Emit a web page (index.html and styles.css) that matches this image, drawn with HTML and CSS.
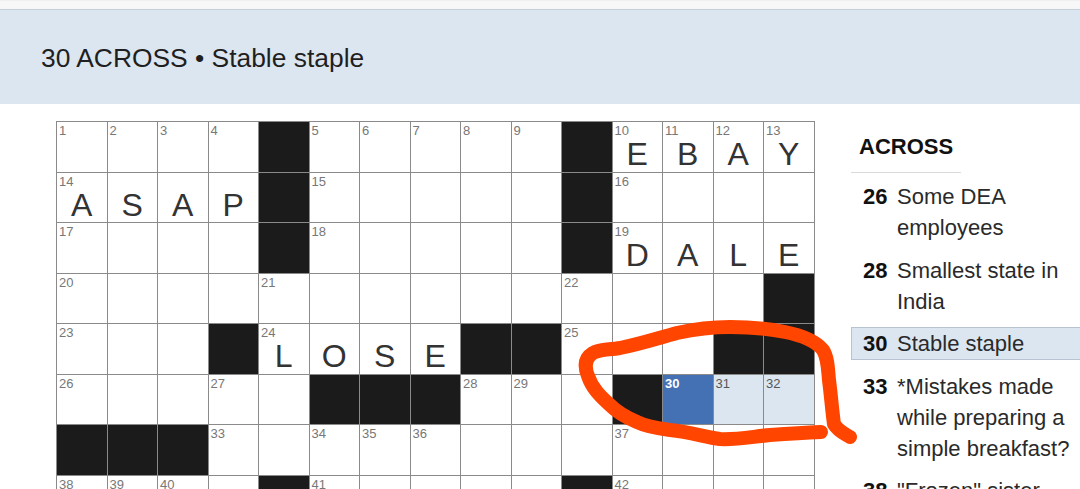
FILE: index.html
```html
<!DOCTYPE html>
<html lang="en">
<head>
<meta charset="utf-8">
<title>Crossword</title>
<link rel="stylesheet" href="styles.css">
</head>
<body>
<div class="topstrip"></div>
<header class="clue-bar">30 ACROSS • Stable staple</header>
<main class="main">
  <div class="grid">
    <!-- row 1 -->
    <div class="c"><i>1</i></div><div class="c"><i>2</i></div><div class="c"><i>3</i></div><div class="c"><i>4</i></div><div class="c b"></div>
    <div class="c"><i>5</i></div><div class="c"><i>6</i></div><div class="c"><i>7</i></div><div class="c"><i>8</i></div><div class="c"><i>9</i></div>
    <div class="c b"></div><div class="c"><i>10</i><span>E</span></div><div class="c"><i>11</i><span>B</span></div><div class="c"><i>12</i><span>A</span></div><div class="c"><i>13</i><span>Y</span></div>
    <!-- row 2 -->
    <div class="c"><i>14</i><span>A</span></div><div class="c"><span>S</span></div><div class="c"><span>A</span></div><div class="c"><span>P</span></div><div class="c b"></div>
    <div class="c"><i>15</i></div><div class="c"></div><div class="c"></div><div class="c"></div><div class="c"></div>
    <div class="c b"></div><div class="c"><i>16</i></div><div class="c"></div><div class="c"></div><div class="c"></div>
    <!-- row 3 -->
    <div class="c"><i>17</i></div><div class="c"></div><div class="c"></div><div class="c"></div><div class="c b"></div>
    <div class="c"><i>18</i></div><div class="c"></div><div class="c"></div><div class="c"></div><div class="c"></div>
    <div class="c b"></div><div class="c"><i>19</i><span>D</span></div><div class="c"><span>A</span></div><div class="c"><span>L</span></div><div class="c"><span>E</span></div>
    <!-- row 4 -->
    <div class="c"><i>20</i></div><div class="c"></div><div class="c"></div><div class="c"></div><div class="c"><i>21</i></div>
    <div class="c"></div><div class="c"></div><div class="c"></div><div class="c"></div><div class="c"></div>
    <div class="c"><i>22</i></div><div class="c"></div><div class="c"></div><div class="c"></div><div class="c b"></div>
    <!-- row 5 -->
    <div class="c"><i>23</i></div><div class="c"></div><div class="c"></div><div class="c b"></div><div class="c"><i>24</i><span>L</span></div>
    <div class="c"><span>O</span></div><div class="c"><span>S</span></div><div class="c"><span>E</span></div><div class="c b"></div><div class="c b"></div>
    <div class="c"><i>25</i></div><div class="c"></div><div class="c"></div><div class="c b"></div><div class="c b"></div>
    <!-- row 6 -->
    <div class="c"><i>26</i></div><div class="c"></div><div class="c"></div><div class="c"><i>27</i></div><div class="c"></div>
    <div class="c b"></div><div class="c b"></div><div class="c b"></div><div class="c"><i>28</i></div><div class="c"><i>29</i></div>
    <div class="c"></div><div class="c b"></div><div class="c sel"><i>30</i></div><div class="c word"><i>31</i></div><div class="c word"><i>32</i></div>
    <!-- row 7 -->
    <div class="c b"></div><div class="c b"></div><div class="c b"></div><div class="c"><i>33</i></div><div class="c"></div>
    <div class="c"><i>34</i></div><div class="c"><i>35</i></div><div class="c"><i>36</i></div><div class="c"></div><div class="c"></div>
    <div class="c"></div><div class="c"><i>37</i></div><div class="c"></div><div class="c"></div><div class="c"></div>
    <!-- row 8 -->
    <div class="c"><i>38</i></div><div class="c"><i>39</i></div><div class="c"><i>40</i></div><div class="c"></div><div class="c b"></div>
    <div class="c"><i>41</i></div><div class="c"></div><div class="c"></div><div class="c"></div><div class="c"></div>
    <div class="c b"></div><div class="c"><i>42</i></div><div class="c"></div><div class="c"></div><div class="c"></div>
  </div>

  <aside class="clues">
    <h2 class="clues-title">ACROSS</h2>
    <ol class="clue-list">
      <li class="clue"><b>26</b><span>Some DEA employees</span></li>
      <li class="clue"><b>28</b><span>Smallest state in India</span></li>
      <li class="clue active"><b>30</b><span>Stable staple</span></li>
      <li class="clue"><b>33</b><span>*Mistakes made while preparing a simple breakfast?</span></li>
      <li class="clue"><b>38</b><span>"Frozen" sister</span></li>
    </ol>
  </aside>
</main>

<svg class="ink" width="1080" height="489" viewBox="0 0 1080 489" aria-hidden="true">
  <path d="M821,432 C800,433 785,434 770,435 C750,437 735,440 720,439 C705,437 690,432 670,430 C655,428 645,426 637,422 C625,417 617,412 610,405 C600,396 592,388 588,376 C584,366 585,358 593,353 C600,349 608,350 620,348 C640,344 655,339 677,333 C695,329 710,327 730,327 C750,327 765,328 785,332 C800,335 815,340 823,350 C828,358 828,370 829,380 C831,395 832,410 834,424 C838,431 845,434 850,437" fill="none" stroke="#ff4500" stroke-width="14" stroke-linecap="round" stroke-linejoin="round"/>
</svg>
</body>
</html>
```

FILE: styles.css
```css
html, body {
  margin: 0;
  padding: 0;
}
body {
  width: 1080px;
  height: 489px;
  overflow: hidden;
  position: relative;
  background: #fff;
  font-family: "Liberation Sans", Arial, sans-serif;
  color: #222;
}
.topstrip {
  height: 9px;
  background: linear-gradient(#ececec, #f8f8f8 20%, #f6f6f6);
  border-bottom: 1px solid #c6d0db;
}
.clue-bar {
  height: 94px;
  box-sizing: border-box;
  padding: 2px 0 0 41px;
  line-height: 93px;
  background: #dce6f1;
  font-size: 26.4px;
  color: #1f1f1f;
  white-space: nowrap;
  overflow: hidden;
}
.main {
  display: flex;
  align-items: flex-start;
}
.grid {
  margin: 17px 0 0 56px;
  display: grid;
  grid-template-columns: repeat(15, 49.5px);
  grid-auto-rows: 49.5px;
  gap: 1px;
  padding: 1px;
  background: #8a8a8a;
  flex: none;
}
.c {
  position: relative;
  background: #fff;
}
.c.b {
  background: #1b1b1b;
}
.c.sel {
  background: #4471b3;
}
.c.word {
  background: #dce6f1;
}
.c i {
  position: absolute;
  left: 2px;
  top: 2px;
  font-style: normal;
  font-size: 13px;
  line-height: 14px;
  color: #777;
}
.c.sel i {
  color: #fff;
  font-weight: bold;
}
.c.word i {
  color: #555;
}
.c span {
  display: block;
  padding-top: 16px;
  line-height: 32px;
  font-size: 32px;
  text-align: center;
  color: #333;
}
.clues {
  margin-left: 36.5px;
  padding-top: 30px;
  width: 260px;
  flex: none;
}
.clues-title {
  margin: 0;
  width: 110px;
  box-sizing: border-box;
  padding: 0 0 12px 8px;
  font-size: 22px;
  line-height: 26px;
  font-weight: bold;
  color: #111;
  border-bottom: 1px solid #dadada;
}
.clue-list {
  list-style: none;
  margin: 7px 0 0;
  padding: 0;
}
.clue {
  display: flex;
  margin-bottom: 9.5px;
  padding-left: 11px;
  border: 1px solid transparent;
  font-size: 22px;
  line-height: 31px;
  color: #2a2a2a;
}
.clue b {
  width: 34px;
  flex: none;
  color: #111;
}
.clue span {
  width: 180px;
}
.clue.active {
  background: #dce6f1;
  border-color: #b7c3d1;
}
.ink {
  position: absolute;
  left: 0;
  top: 0;
  pointer-events: none;
}
```
